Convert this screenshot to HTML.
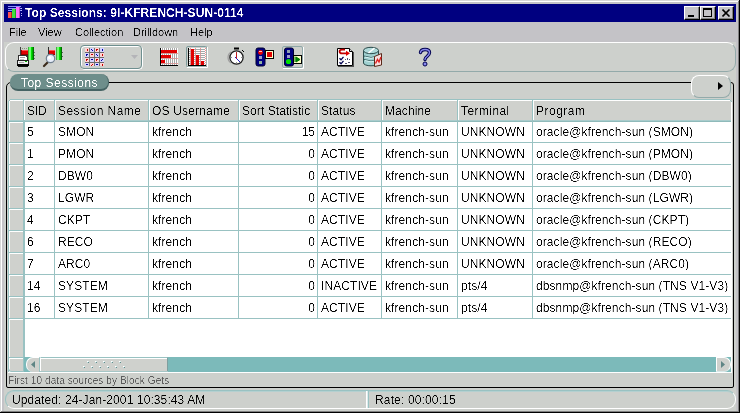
<!DOCTYPE html>
<html><head><meta charset="utf-8">
<style>
*{margin:0;padding:0;box-sizing:border-box}
html,body{width:740px;height:413px;overflow:hidden;background:#c4c3c7}
body{position:relative;font-family:"Liberation Sans",sans-serif;font-size:12px;color:#000}
.a{position:absolute}
.t{position:absolute;white-space:pre;line-height:1;filter:url(#crisp)}
.c{font-size:12px;letter-spacing:0.09px}
.menu{font-size:11px;top:27px}
.wb{position:absolute;top:6px;width:16px;height:14px;background:#c4c3c7;border-top:1px solid #fff;border-left:1px solid #fff;border-right:1px solid #000;border-bottom:1px solid #000;box-shadow:inset -1px -1px 0 #808080}
</style></head><body>
<svg width="0" height="0" style="position:absolute"><filter id="crisp" x="0" y="0" width="100%" height="100%"><feComponentTransfer><feFuncA type="linear" slope="2.5" intercept="-0.9"/></feComponentTransfer></filter></svg>
<div class="a" style="left:0px;top:0px;width:740px;height:1px;background:#d8d8d8;"></div>
<div class="a" style="left:0px;top:0px;width:1px;height:413px;background:#d8d8d8;"></div>
<div class="a" style="left:1px;top:1px;width:738px;height:1px;background:#fff;"></div>
<div class="a" style="left:1px;top:1px;width:1px;height:411px;background:#fff;"></div>
<div class="a" style="left:739px;top:0px;width:1px;height:413px;background:#000;"></div>
<div class="a" style="left:0px;top:412px;width:740px;height:1px;background:#000;"></div>
<div class="a" style="left:738px;top:1px;width:1px;height:411px;background:#808080;"></div>
<div class="a" style="left:1px;top:411px;width:738px;height:1px;background:#808080;"></div>
<div class="a" style="left:4px;top:42px;width:732px;height:369px;background:#cdd0cc;"></div>
<div class="a" style="left:4px;top:4px;width:732px;height:18px;background:#000080;"></div>
<svg class="a" style="left:8px;top:6px" width="14" height="14" viewBox="0 0 14 14" shape-rendering="crispEdges">
<rect x="0" y="0" width="13" height="1" fill="#9090ff"/><rect x="0" y="2" width="13" height="1" fill="#9090ff"/><rect x="0" y="4" width="13" height="1" fill="#9090ff"/>
<rect x="0" y="6" width="4" height="6" fill="#ff5050"/><rect x="3" y="6" width="1" height="6" fill="#c02020"/>
<rect x="4" y="3" width="4" height="9" fill="#40e040"/><rect x="7" y="3" width="1" height="9" fill="#20a020"/>
<rect x="8" y="1" width="4" height="11" fill="#ff70ff"/><rect x="11" y="1" width="1" height="11" fill="#c040c0"/>
<rect x="13" y="2" width="1" height="1" fill="#c0c0ff"/><rect x="13" y="4" width="1" height="1" fill="#c0c0ff"/><rect x="13" y="7" width="1" height="1" fill="#c0c0ff"/><rect x="13" y="9" width="1" height="1" fill="#c0c0ff"/>
</svg>
<div class="t" style="left:25px;top:7px;color:#fff;font-weight:bold;font-size:12px;letter-spacing:0.06px">Top Sessions: 9I-KFRENCH-SUN-0114</div>
<div class="wb" style="left:684px"><div class="a" style="left:3px;top:8px;width:6px;height:2px;background:#000"></div></div>
<div class="wb" style="left:700px"><div class="a" style="left:2px;top:1px;width:9px;height:9px;border:1px solid #000;border-top-width:2px"></div></div>
<div class="wb" style="left:718px"><svg class="a" style="left:3px;top:2px" width="9" height="8" viewBox="0 0 9 8"><path d="M0.5 0.5L7.5 7.5M7.5 0.5L0.5 7.5" stroke="#000" stroke-width="1.6"/></svg></div>
<div class="t menu" style="left:9px">File</div>
<div class="t menu" style="left:38px">View</div>
<div class="t menu" style="left:75px">Collection</div>
<div class="t menu" style="left:133px">Drilldown</div>
<div class="t menu" style="left:190px">Help</div>
<div class="a" style="left:5px;top:42px;width:731px;height:30px;border:1px solid #fff;border-right-color:#93aaaa;border-bottom-color:#93aaaa;border-radius:9px"></div>
<div class="a" style="left:80px;top:45px;width:63px;height:25px;border:1px solid #fff;border-top-color:transparent;border-left-color:transparent;border-radius:5px"></div>
<div class="a" style="left:80px;top:45px;width:62px;height:24px;border:1px solid #6e8f8f;border-radius:4px;box-shadow:inset 1px 1px 0 #fff"></div>
<svg class="a" style="left:131px;top:55px" width="8" height="4"><path d="M0 0H7L3.5 4Z" fill="#b4b4b8"/></svg>
<svg class="a" style="left:0;top:0" width="740" height="80" viewBox="0 0 740 80">
<g shape-rendering="crispEdges">
<rect x="20" y="47" width="1" height="8" fill="#404040"/>
<rect x="22" y="48" width="1" height="1" fill="#8a9a7a"/>
<rect x="24" y="48" width="1" height="1" fill="#8a9a7a"/>
<rect x="26" y="48" width="1" height="1" fill="#8a9a7a"/>
<rect x="28" y="48" width="1" height="1" fill="#8a9a7a"/>
<rect x="30" y="48" width="1" height="1" fill="#8a9a7a"/>
<rect x="32" y="48" width="1" height="1" fill="#8a9a7a"/>
<rect x="21" y="50" width="7" height="5" fill="#e00000"/><rect x="21" y="50" width="7" height="1" fill="#ff5050"/><rect x="21" y="50" width="1" height="5" fill="#a00000"/><rect x="21" y="54" width="7" height="1" fill="#900000"/>
<rect x="28" y="47" width="6" height="13" fill="#00e000"/><rect x="28" y="47" width="1" height="13" fill="#40b040"/><rect x="29" y="47" width="2" height="13" fill="#70ff70"/><rect x="33" y="47" width="1" height="13" fill="#007000"/><rect x="32" y="47" width="1" height="13" fill="#00b000"/>
<rect x="34" y="52" width="1" height="1" fill="#707070"/><rect x="34" y="55" width="1" height="1" fill="#707070"/><rect x="34" y="58" width="1" height="1" fill="#707070"/>
<rect x="18" y="55" width="10" height="5" fill="#303030"/><rect x="19" y="56" width="8" height="4" fill="#fff"/>
<rect x="20" y="57" width="5" height="1" fill="#a0a0a0"/><rect x="20" y="59" width="4" height="1" fill="#c0c0c0"/><rect x="26" y="56" width="1" height="1" fill="#404040"/>
<rect x="17" y="60" width="12" height="4" fill="#202020"/><rect x="18" y="61" width="10" height="3" fill="#f0f0f0"/>
<rect x="19" y="62" width="5" height="1" fill="#a8a8a8"/><rect x="25" y="61" width="2" height="1" fill="#00b000"/>
<rect x="17" y="64" width="12" height="2" fill="#000"/><rect x="18" y="66" width="10" height="1" fill="#101010"/>
</g>
<g shape-rendering="crispEdges">
<rect x="48" y="47" width="1" height="9" fill="#303030"/>
<rect x="49" y="50" width="6" height="5" fill="#e00000"/><rect x="49" y="50" width="6" height="1" fill="#ff5050"/><rect x="49" y="54" width="6" height="1" fill="#900000"/>
<rect x="56" y="47" width="6" height="13" fill="#00e000"/><rect x="56" y="47" width="1" height="13" fill="#40b040"/><rect x="57" y="47" width="2" height="13" fill="#70ff70"/><rect x="61" y="47" width="1" height="13" fill="#007000"/><rect x="60" y="47" width="1" height="13" fill="#00b000"/>
<rect x="62" y="52" width="1" height="1" fill="#606060"/><rect x="62" y="56" width="1" height="1" fill="#606060"/>
</g>
<line x1="44" y1="66" x2="48" y2="62" stroke="#3a2a1a" stroke-width="2.2" stroke-linecap="round"/>
<circle cx="50.5" cy="58.5" r="4.2" fill="#e8eefa" stroke="#708090" stroke-width="1.2"/>
<circle cx="49.5" cy="57.5" r="1.6" fill="#fff"/>
<g shape-rendering="crispEdges">
<rect x="85" y="48" width="4" height="4" fill="#ffd4d4"/>
<rect x="87" y="49" width="1" height="2" fill="#c00000"/>
<rect x="90" y="48" width="4" height="4" fill="#d4d4ff"/>
<rect x="91" y="49" width="1" height="1" fill="#0000a0"/><rect x="92" y="50" width="1" height="1" fill="#0000a0"/>
<rect x="95" y="48" width="4" height="4" fill="#ffd4d4"/>
<rect x="96" y="49" width="2" height="1" fill="#c00000"/><rect x="96" y="50" width="1" height="1" fill="#c00000"/>
<rect x="100" y="48" width="4" height="4" fill="#d4d4ff"/>
<rect x="102" y="49" width="1" height="2" fill="#0000a0"/>
<rect x="85" y="53" width="4" height="4" fill="#d4d4ff"/>
<rect x="86" y="54" width="2" height="1" fill="#0000a0"/><rect x="86" y="55" width="1" height="1" fill="#0000a0"/>
<rect x="90" y="53" width="4" height="4" fill="#ffd4d4"/>
<rect x="91" y="54" width="2" height="1" fill="#c00000"/>
<rect x="95" y="53" width="4" height="4" fill="#d4d4ff"/>
<rect x="96" y="54" width="1" height="1" fill="#0000a0"/><rect x="97" y="55" width="1" height="1" fill="#0000a0"/>
<rect x="100" y="53" width="4" height="4" fill="#ffd4d4"/>
<rect x="102" y="54" width="1" height="2" fill="#c00000"/>
<rect x="85" y="58" width="4" height="4" fill="#ffd4d4"/>
<rect x="86" y="59" width="2" height="1" fill="#c00000"/><rect x="86" y="60" width="1" height="1" fill="#c00000"/>
<rect x="90" y="58" width="4" height="4" fill="#d4d4ff"/>
<rect x="91" y="59" width="2" height="1" fill="#0000a0"/>
<rect x="95" y="58" width="4" height="4" fill="#ffd4d4"/>
<rect x="96" y="59" width="2" height="1" fill="#c00000"/><rect x="96" y="60" width="1" height="1" fill="#c00000"/>
<rect x="100" y="58" width="4" height="4" fill="#d4d4ff"/>
<rect x="102" y="59" width="1" height="1" fill="#0000a0"/><rect x="101" y="60" width="1" height="1" fill="#0000a0"/>
<rect x="85" y="63" width="4" height="3" fill="#d4d4ff"/>
<rect x="86" y="64" width="2" height="1" fill="#0000a0"/>
<rect x="90" y="63" width="4" height="3" fill="#ffd4d4"/>
<rect x="92" y="64" width="1" height="1" fill="#c00000"/><rect x="91" y="65" width="1" height="1" fill="#c00000"/>
<rect x="95" y="63" width="4" height="3" fill="#d4d4ff"/>
<rect x="96" y="64" width="2" height="1" fill="#0000a0"/>
<rect x="100" y="63" width="4" height="3" fill="#ffd4d4"/>
<rect x="102" y="64" width="1" height="2" fill="#c00000"/>
<rect x="89" y="48" width="1" height="18" fill="#747474"/>
<rect x="94" y="48" width="1" height="18" fill="#747474"/>
<rect x="99" y="48" width="1" height="18" fill="#747474"/>
<rect x="85" y="52" width="19" height="1" fill="#6a6a6a"/>
<rect x="85" y="57" width="19" height="1" fill="#6a6a6a"/>
<rect x="85" y="62" width="19" height="1" fill="#6a6a6a"/>
</g>
<g shape-rendering="crispEdges">
<rect x="161" y="48" width="17" height="17" fill="#fff"/>
<rect x="162" y="48" width="1" height="17" fill="#a8a8a8"/>
<rect x="164" y="48" width="1" height="17" fill="#a8a8a8"/>
<rect x="166" y="48" width="1" height="17" fill="#a8a8a8"/>
<rect x="168" y="48" width="1" height="17" fill="#a8a8a8"/>
<rect x="170" y="48" width="1" height="17" fill="#a8a8a8"/>
<rect x="172" y="48" width="1" height="17" fill="#a8a8a8"/>
<rect x="174" y="48" width="1" height="17" fill="#a8a8a8"/>
<rect x="176" y="48" width="1" height="17" fill="#a8a8a8"/>
<rect x="161" y="53" width="1" height="1" fill="#ff9090"/>
<rect x="163" y="53" width="1" height="1" fill="#ff9090"/>
<rect x="165" y="53" width="1" height="1" fill="#ff9090"/>
<rect x="167" y="53" width="1" height="1" fill="#ff9090"/>
<rect x="169" y="53" width="1" height="1" fill="#ff9090"/>
<rect x="171" y="53" width="1" height="1" fill="#ff9090"/>
<rect x="173" y="53" width="1" height="1" fill="#ff9090"/>
<rect x="175" y="53" width="1" height="1" fill="#ff9090"/>
<rect x="177" y="53" width="1" height="1" fill="#ff9090"/>
<rect x="161" y="58" width="1" height="1" fill="#ff9090"/>
<rect x="163" y="58" width="1" height="1" fill="#ff9090"/>
<rect x="165" y="58" width="1" height="1" fill="#ff9090"/>
<rect x="167" y="58" width="1" height="1" fill="#ff9090"/>
<rect x="169" y="58" width="1" height="1" fill="#ff9090"/>
<rect x="171" y="58" width="1" height="1" fill="#ff9090"/>
<rect x="173" y="58" width="1" height="1" fill="#ff9090"/>
<rect x="175" y="58" width="1" height="1" fill="#ff9090"/>
<rect x="177" y="58" width="1" height="1" fill="#ff9090"/>
<rect x="161" y="63" width="1" height="1" fill="#ff9090"/>
<rect x="163" y="63" width="1" height="1" fill="#ff9090"/>
<rect x="165" y="63" width="1" height="1" fill="#ff9090"/>
<rect x="167" y="63" width="1" height="1" fill="#ff9090"/>
<rect x="169" y="63" width="1" height="1" fill="#ff9090"/>
<rect x="171" y="63" width="1" height="1" fill="#ff9090"/>
<rect x="173" y="63" width="1" height="1" fill="#ff9090"/>
<rect x="175" y="63" width="1" height="1" fill="#ff9090"/>
<rect x="177" y="63" width="1" height="1" fill="#ff9090"/>
<rect x="161" y="50" width="16" height="3" fill="#e00000"/>
<rect x="161" y="55" width="10" height="3" fill="#e00000"/>
<rect x="161" y="60" width="4" height="3" fill="#e00000"/>
<rect x="160" y="48" width="1" height="18" fill="#000"/><rect x="160" y="65" width="18" height="1" fill="#000"/>
</g>
<rect x="186.5" y="46.5" width="20.5" height="20.5" rx="1.5" fill="none" stroke="#7f9c9c" stroke-width="1"/>
<path d="M207.5 47V67.5H187" fill="none" stroke="#fff" stroke-width="1"/>
<g shape-rendering="crispEdges">
<rect x="189" y="48" width="17" height="17" fill="#fff"/>
<rect x="189" y="49" width="16" height="1" fill="#a8a8a8"/>
<rect x="189" y="51" width="16" height="1" fill="#a8a8a8"/>
<rect x="189" y="53" width="16" height="1" fill="#a8a8a8"/>
<rect x="189" y="55" width="16" height="1" fill="#a8a8a8"/>
<rect x="189" y="57" width="16" height="1" fill="#a8a8a8"/>
<rect x="189" y="59" width="16" height="1" fill="#a8a8a8"/>
<rect x="189" y="61" width="16" height="1" fill="#a8a8a8"/>
<rect x="189" y="63" width="16" height="1" fill="#a8a8a8"/>
<rect x="190" y="48" width="1" height="1" fill="#ff9090"/>
<rect x="190" y="50" width="1" height="1" fill="#ff9090"/>
<rect x="190" y="52" width="1" height="1" fill="#ff9090"/>
<rect x="190" y="54" width="1" height="1" fill="#ff9090"/>
<rect x="190" y="56" width="1" height="1" fill="#ff9090"/>
<rect x="190" y="58" width="1" height="1" fill="#ff9090"/>
<rect x="190" y="60" width="1" height="1" fill="#ff9090"/>
<rect x="190" y="62" width="1" height="1" fill="#ff9090"/>
<rect x="190" y="64" width="1" height="1" fill="#ff9090"/>
<rect x="195" y="48" width="1" height="1" fill="#ff9090"/>
<rect x="195" y="50" width="1" height="1" fill="#ff9090"/>
<rect x="195" y="52" width="1" height="1" fill="#ff9090"/>
<rect x="195" y="54" width="1" height="1" fill="#ff9090"/>
<rect x="195" y="56" width="1" height="1" fill="#ff9090"/>
<rect x="195" y="58" width="1" height="1" fill="#ff9090"/>
<rect x="195" y="60" width="1" height="1" fill="#ff9090"/>
<rect x="195" y="62" width="1" height="1" fill="#ff9090"/>
<rect x="195" y="64" width="1" height="1" fill="#ff9090"/>
<rect x="200" y="48" width="1" height="1" fill="#ff9090"/>
<rect x="200" y="50" width="1" height="1" fill="#ff9090"/>
<rect x="200" y="52" width="1" height="1" fill="#ff9090"/>
<rect x="200" y="54" width="1" height="1" fill="#ff9090"/>
<rect x="200" y="56" width="1" height="1" fill="#ff9090"/>
<rect x="200" y="58" width="1" height="1" fill="#ff9090"/>
<rect x="200" y="60" width="1" height="1" fill="#ff9090"/>
<rect x="200" y="62" width="1" height="1" fill="#ff9090"/>
<rect x="200" y="64" width="1" height="1" fill="#ff9090"/>
<rect x="205" y="48" width="1" height="1" fill="#ff9090"/>
<rect x="205" y="50" width="1" height="1" fill="#ff9090"/>
<rect x="205" y="52" width="1" height="1" fill="#ff9090"/>
<rect x="205" y="54" width="1" height="1" fill="#ff9090"/>
<rect x="205" y="56" width="1" height="1" fill="#ff9090"/>
<rect x="205" y="58" width="1" height="1" fill="#ff9090"/>
<rect x="205" y="60" width="1" height="1" fill="#ff9090"/>
<rect x="205" y="62" width="1" height="1" fill="#ff9090"/>
<rect x="205" y="64" width="1" height="1" fill="#ff9090"/>
<rect x="191" y="49" width="3" height="16" fill="#e00000"/>
<rect x="196" y="55" width="3" height="10" fill="#e00000"/>
<rect x="201" y="61" width="3" height="4" fill="#e00000"/>
<rect x="188" y="48" width="1" height="18" fill="#000"/><rect x="188" y="65" width="18" height="1" fill="#000"/>
</g>
<circle cx="236.5" cy="57.5" r="6.6" fill="#fff" stroke="#202020" stroke-width="1.3"/>
<path d="M231 52A6.6 6.6 0 0 0 231 63" fill="none" stroke="#a0a0a0" stroke-width="1.3"/>
<rect x="234" y="47.5" width="5" height="2" fill="#000"/>
<line x1="242" y1="50" x2="244" y2="52" stroke="#000" stroke-width="1"/>
<g shape-rendering="crispEdges">
<rect x="236" y="52" width="1" height="6" fill="#c02020"/>
<rect x="236" y="58" width="1" height="1" fill="#800080"/><rect x="237" y="59" width="1" height="1" fill="#2020c0"/><rect x="238" y="60" width="1" height="1" fill="#2020c0"/><rect x="239" y="61" width="1" height="1" fill="#2020c0"/>
<rect x="231" y="57" width="1" height="1" fill="#909090"/><rect x="241" y="57" width="1" height="1" fill="#909090"/><rect x="236" y="62" width="1" height="1" fill="#909090"/><rect x="235" y="57" width="1" height="1" fill="#2020c0"/>
</g>
<rect x="256" y="48" width="9" height="18" rx="2" fill="#000080" stroke="#000030" stroke-width="1"/>
<circle cx="260.5" cy="52.5" r="2.4" fill="#f00000"/><rect x="259" y="51" width="3" height="1" fill="#ffc0c0"/>
<rect x="259" y="56" width="3" height="3" fill="#a0a0c8"/><rect x="259" y="61" width="3" height="3" fill="#90b0a0"/>
<rect x="265.5" y="50.5" width="8" height="8" fill="#ffffc8" stroke="#000" stroke-width="1"/>
<rect x="267" y="52" width="5" height="5" fill="#e00000"/>
<rect x="282.5" y="46.5" width="20" height="21" rx="1.5" fill="none" stroke="#8fa8a8" stroke-width="1"/>
<path d="M303.5 47V68.5H283" fill="none" stroke="#fff" stroke-width="1"/>
<rect x="284.5" y="48" width="9" height="18" rx="2" fill="#000080" stroke="#000030" stroke-width="1"/>
<rect x="287" y="50" width="3" height="3" fill="#90a0b0"/><rect x="287" y="55" width="3" height="3" fill="#a0a0c8"/>
<circle cx="288.5" cy="61.5" r="2.6" fill="#00e000"/>
<rect x="293.5" y="55.5" width="8" height="8" fill="#ffffc8" stroke="#000" stroke-width="1"/>
<path d="M295 56.5V62M296 57L300 59.5L296 62Z" fill="#008000" stroke="#008000" stroke-width="1"/>
<path d="M337.5 48.5H349.5L352.5 51.5V65.5H337.5Z" fill="#fff" stroke="#000" stroke-width="1"/>
<path d="M349.5 48.5V51.5H352.5" fill="#e0e0e0" stroke="#000" stroke-width="1"/>
<rect x="338" y="66" width="15" height="1" fill="#505050"/><rect x="353" y="52" width="1" height="15" fill="#505050"/>
<path d="M345 49.6H342Q339.6 49.6 339.6 51.4Q339.6 53.3 342 53.3H347" fill="none" stroke="#c00000" stroke-width="1.8"/>
<path d="M346 50.8L350 53.3L346 56Z" fill="#e00000"/>
<path d="M339.5 58.3L341 59.8L343.5 56.8M339.5 62.3L341 63.8L343.5 60.8" fill="none" stroke="#000050" stroke-width="1.3"/>
<g shape-rendering="crispEdges"><rect x="345" y="59" width="1" height="1" fill="#505070"/><rect x="347" y="58" width="1" height="2" fill="#505070"/><rect x="349" y="59" width="1" height="1" fill="#505070"/><rect x="345" y="63" width="2" height="1" fill="#505070"/><rect x="348" y="62" width="2" height="1" fill="#505070"/></g>
<path d="M363.5 50.5V63A7.5 2.8 0 0 0 378.5 63V50.5" fill="#a0d0d0" stroke="#2a4a4a" stroke-width="1"/>
<path d="M364 56Q371 59 378 56M364 59.5Q371 62.5 378 59.5" fill="none" stroke="#3a6262" stroke-width="1"/>
<path d="M365 57Q371 59.5 377 57M365 60.5Q371 63 377 60.5" fill="none" stroke="#e8ffff" stroke-width="0.8"/>
<ellipse cx="371" cy="50.5" rx="7.5" ry="3.2" fill="#b0dada" stroke="#2a4a4a" stroke-width="1"/>
<path d="M368.5 53L374.5 48" stroke="#fff" stroke-width="1.6"/>
<path d="M374.5 56.5L381.5 53.5V65L374.5 66.5Z" fill="#f8e0e0" stroke="#5a2818" stroke-width="1"/>
<path d="M375.5 63.5L377.5 59.5L379 62L381 57" fill="none" stroke="#e02020" stroke-width="1.4"/>
<path d="M420.5 52.5Q421 49.5 425 49.5Q429.5 49.5 429.5 52.5Q429.5 54.5 427 56.5Q425 58 425 59.5" fill="none" stroke="#000050" stroke-width="3.4" stroke-linecap="round"/>
<path d="M420.5 52.5Q421 49.5 425 49.5Q429.5 49.5 429.5 52.5Q429.5 54.5 427 56.5Q425 58 425 59.5" fill="none" stroke="#8a8aee" stroke-width="1.4" stroke-linecap="round"/>
<circle cx="425" cy="64" r="2" fill="#8a8aee" stroke="#000050" stroke-width="1"/>
</svg>
<div class="a" style="left:6px;top:82px;width:728px;height:306px;border:1px solid #000;border-radius:5px 3px 2px 2px"></div>
<div class="a" style="left:10px;top:74px;width:99px;height:17px;background:#6e8e8b;border-radius:8px;border-right:1px solid #456363;border-bottom:2px solid #456363"></div>
<div class="t" style="left:21px;top:77px;color:#fff;font-size:12px;letter-spacing:0.47px">Top Sessions</div>
<div class="a" style="left:691px;top:75px;width:40px;height:23px;background:#cdd0cc;border:1px solid #fff;border-right-color:#93aaaa;border-bottom-color:#93aaaa;border-radius:8px"></div>
<svg class="a" style="left:718px;top:82px" width="5" height="8"><path d="M0 0L5 4L0 8Z" fill="#000"/></svg>
<div class="a" style="left:8px;top:99px;width:724px;height:274px;background:#fff;"></div>
<div class="a" style="left:8px;top:99px;width:723px;height:22px;background:#cfd1cd;"></div>
<div class="a" style="left:8px;top:99px;width:15px;height:258px;background:#cfd1cd;"></div>
<div class="a" style="left:8px;top:99px;width:723px;height:1px;background:#99c2c2;"></div>
<div class="a" style="left:9px;top:100px;width:722px;height:1px;background:#fff;"></div>
<div class="a" style="left:8px;top:99px;width:1px;height:273px;background:#99c2c2;"></div>
<div class="a" style="left:9px;top:100px;width:1px;height:257px;background:#fff;"></div>
<div class="a" style="left:8px;top:120px;width:723px;height:1px;background:#99c2c2;"></div>
<div class="a" style="left:8px;top:120px;width:723px;height:1px;background:#a9cccc;"></div>
<div class="a" style="left:8px;top:121px;width:723px;height:1px;background:#8fbaba;"></div>
<div class="a" style="left:9px;top:122px;width:14px;height:1px;background:#fff;"></div>
<div class="a" style="left:8px;top:142px;width:723px;height:1px;background:#99c2c2;"></div>
<div class="a" style="left:9px;top:143px;width:14px;height:1px;background:#fff;"></div>
<div class="a" style="left:8px;top:164px;width:723px;height:1px;background:#99c2c2;"></div>
<div class="a" style="left:9px;top:165px;width:14px;height:1px;background:#fff;"></div>
<div class="a" style="left:8px;top:186px;width:723px;height:1px;background:#99c2c2;"></div>
<div class="a" style="left:9px;top:187px;width:14px;height:1px;background:#fff;"></div>
<div class="a" style="left:8px;top:208px;width:723px;height:1px;background:#99c2c2;"></div>
<div class="a" style="left:9px;top:209px;width:14px;height:1px;background:#fff;"></div>
<div class="a" style="left:8px;top:230px;width:723px;height:1px;background:#99c2c2;"></div>
<div class="a" style="left:9px;top:231px;width:14px;height:1px;background:#fff;"></div>
<div class="a" style="left:8px;top:252px;width:723px;height:1px;background:#99c2c2;"></div>
<div class="a" style="left:9px;top:253px;width:14px;height:1px;background:#fff;"></div>
<div class="a" style="left:8px;top:274px;width:723px;height:1px;background:#99c2c2;"></div>
<div class="a" style="left:9px;top:275px;width:14px;height:1px;background:#fff;"></div>
<div class="a" style="left:8px;top:296px;width:723px;height:1px;background:#99c2c2;"></div>
<div class="a" style="left:9px;top:297px;width:14px;height:1px;background:#fff;"></div>
<div class="a" style="left:8px;top:318px;width:723px;height:1px;background:#99c2c2;"></div>
<div class="a" style="left:9px;top:319px;width:14px;height:1px;background:#fff;"></div>
<div class="a" style="left:23px;top:99px;width:1px;height:273px;background:#99c2c2;"></div>
<div class="a" style="left:24px;top:120px;width:1px;height:237px;background:#99c2c2;"></div>
<div class="a" style="left:24px;top:100px;width:1px;height:20px;background:#fff;"></div>
<div class="a" style="left:54px;top:99px;width:1px;height:220px;background:#99c2c2;"></div>
<div class="a" style="left:55px;top:100px;width:1px;height:20px;background:#fff;"></div>
<div class="a" style="left:148px;top:99px;width:1px;height:220px;background:#99c2c2;"></div>
<div class="a" style="left:149px;top:100px;width:1px;height:20px;background:#fff;"></div>
<div class="a" style="left:238px;top:99px;width:1px;height:220px;background:#99c2c2;"></div>
<div class="a" style="left:239px;top:100px;width:1px;height:20px;background:#fff;"></div>
<div class="a" style="left:317px;top:99px;width:1px;height:220px;background:#99c2c2;"></div>
<div class="a" style="left:318px;top:100px;width:1px;height:20px;background:#fff;"></div>
<div class="a" style="left:381px;top:99px;width:1px;height:220px;background:#99c2c2;"></div>
<div class="a" style="left:382px;top:100px;width:1px;height:20px;background:#fff;"></div>
<div class="a" style="left:457px;top:99px;width:1px;height:220px;background:#99c2c2;"></div>
<div class="a" style="left:458px;top:100px;width:1px;height:20px;background:#fff;"></div>
<div class="a" style="left:532px;top:99px;width:1px;height:220px;background:#99c2c2;"></div>
<div class="a" style="left:533px;top:100px;width:1px;height:20px;background:#fff;"></div>
<svg class="a" style="left:8px;top:99px" width="4" height="4" shape-rendering="crispEdges"><rect x="0" y="0" width="2" height="1" fill="#cdd0cc"/><rect x="0" y="1" width="1" height="1" fill="#cdd0cc"/><rect x="2" y="0" width="2" height="1" fill="#99c2c2"/><rect x="1" y="1" width="1" height="1" fill="#99c2c2"/><rect x="0" y="2" width="1" height="2" fill="#99c2c2"/><rect x="2" y="1" width="2" height="1" fill="#fff"/><rect x="1" y="2" width="1" height="2" fill="#fff"/></svg>
<svg class="a" style="left:729px;top:99px" width="3" height="3" shape-rendering="crispEdges"><rect x="1" y="0" width="2" height="1" fill="#cdd0cc"/><rect x="2" y="1" width="1" height="1" fill="#cdd0cc"/><rect x="0" y="0" width="1" height="1" fill="#99c2c2"/><rect x="1" y="1" width="1" height="1" fill="#99c2c2"/><rect x="2" y="2" width="1" height="1" fill="#99c2c2"/></svg>
<div class="t c" style="left:27px;top:105px;letter-spacing:-0.2px">SID</div>
<div class="t c" style="left:58px;top:105px;letter-spacing:0.44px">Session Name</div>
<div class="t c" style="left:152px;top:105px;letter-spacing:0.18px">OS Username</div>
<div class="t c" style="left:242px;top:105px;letter-spacing:0.07px">Sort Statistic</div>
<div class="t c" style="left:321px;top:105px;letter-spacing:0.1px">Status</div>
<div class="t c" style="left:385px;top:105px;letter-spacing:0.08px">Machine</div>
<div class="t c" style="left:461px;top:105px;letter-spacing:0.41px">Terminal</div>
<div class="t c" style="left:536px;top:105px;letter-spacing:0.5px">Program</div>
<div class="t c" style="left:27px;top:126px;width:27px;overflow:hidden">5</div>
<div class="t c" style="left:58px;top:126px;width:90px;overflow:hidden">SMON</div>
<div class="t c" style="left:152px;top:126px;width:86px;overflow:hidden">kfrench</div>
<div class="t c" style="left:239px;width:76px;text-align:right;top:126px;letter-spacing:0">15</div>
<div class="t c" style="left:321px;top:126px;width:60px;overflow:hidden">ACTIVE</div>
<div class="t c" style="left:385px;top:126px;width:72px;overflow:hidden">kfrench-sun</div>
<div class="t c" style="left:461px;top:126px;width:71px;overflow:hidden">UNKNOWN</div>
<div class="t c" style="left:536px;top:126px;width:195px;overflow:hidden">oracle@kfrench-sun (SMON)</div>
<div class="t c" style="left:27px;top:148px;width:27px;overflow:hidden">1</div>
<div class="t c" style="left:58px;top:148px;width:90px;overflow:hidden">PMON</div>
<div class="t c" style="left:152px;top:148px;width:86px;overflow:hidden">kfrench</div>
<div class="t c" style="left:239px;width:76px;text-align:right;top:148px;letter-spacing:0">0</div>
<div class="t c" style="left:321px;top:148px;width:60px;overflow:hidden">ACTIVE</div>
<div class="t c" style="left:385px;top:148px;width:72px;overflow:hidden">kfrench-sun</div>
<div class="t c" style="left:461px;top:148px;width:71px;overflow:hidden">UNKNOWN</div>
<div class="t c" style="left:536px;top:148px;width:195px;overflow:hidden">oracle@kfrench-sun (PMON)</div>
<div class="t c" style="left:27px;top:170px;width:27px;overflow:hidden">2</div>
<div class="t c" style="left:58px;top:170px;width:90px;overflow:hidden">DBW0</div>
<div class="t c" style="left:152px;top:170px;width:86px;overflow:hidden">kfrench</div>
<div class="t c" style="left:239px;width:76px;text-align:right;top:170px;letter-spacing:0">0</div>
<div class="t c" style="left:321px;top:170px;width:60px;overflow:hidden">ACTIVE</div>
<div class="t c" style="left:385px;top:170px;width:72px;overflow:hidden">kfrench-sun</div>
<div class="t c" style="left:461px;top:170px;width:71px;overflow:hidden">UNKNOWN</div>
<div class="t c" style="left:536px;top:170px;width:195px;overflow:hidden">oracle@kfrench-sun (DBW0)</div>
<div class="t c" style="left:27px;top:192px;width:27px;overflow:hidden">3</div>
<div class="t c" style="left:58px;top:192px;width:90px;overflow:hidden">LGWR</div>
<div class="t c" style="left:152px;top:192px;width:86px;overflow:hidden">kfrench</div>
<div class="t c" style="left:239px;width:76px;text-align:right;top:192px;letter-spacing:0">0</div>
<div class="t c" style="left:321px;top:192px;width:60px;overflow:hidden">ACTIVE</div>
<div class="t c" style="left:385px;top:192px;width:72px;overflow:hidden">kfrench-sun</div>
<div class="t c" style="left:461px;top:192px;width:71px;overflow:hidden">UNKNOWN</div>
<div class="t c" style="left:536px;top:192px;width:195px;overflow:hidden">oracle@kfrench-sun (LGWR)</div>
<div class="t c" style="left:27px;top:214px;width:27px;overflow:hidden">4</div>
<div class="t c" style="left:58px;top:214px;width:90px;overflow:hidden">CKPT</div>
<div class="t c" style="left:152px;top:214px;width:86px;overflow:hidden">kfrench</div>
<div class="t c" style="left:239px;width:76px;text-align:right;top:214px;letter-spacing:0">0</div>
<div class="t c" style="left:321px;top:214px;width:60px;overflow:hidden">ACTIVE</div>
<div class="t c" style="left:385px;top:214px;width:72px;overflow:hidden">kfrench-sun</div>
<div class="t c" style="left:461px;top:214px;width:71px;overflow:hidden">UNKNOWN</div>
<div class="t c" style="left:536px;top:214px;width:195px;overflow:hidden">oracle@kfrench-sun (CKPT)</div>
<div class="t c" style="left:27px;top:236px;width:27px;overflow:hidden">6</div>
<div class="t c" style="left:58px;top:236px;width:90px;overflow:hidden">RECO</div>
<div class="t c" style="left:152px;top:236px;width:86px;overflow:hidden">kfrench</div>
<div class="t c" style="left:239px;width:76px;text-align:right;top:236px;letter-spacing:0">0</div>
<div class="t c" style="left:321px;top:236px;width:60px;overflow:hidden">ACTIVE</div>
<div class="t c" style="left:385px;top:236px;width:72px;overflow:hidden">kfrench-sun</div>
<div class="t c" style="left:461px;top:236px;width:71px;overflow:hidden">UNKNOWN</div>
<div class="t c" style="left:536px;top:236px;width:195px;overflow:hidden">oracle@kfrench-sun (RECO)</div>
<div class="t c" style="left:27px;top:258px;width:27px;overflow:hidden">7</div>
<div class="t c" style="left:58px;top:258px;width:90px;overflow:hidden">ARC0</div>
<div class="t c" style="left:152px;top:258px;width:86px;overflow:hidden">kfrench</div>
<div class="t c" style="left:239px;width:76px;text-align:right;top:258px;letter-spacing:0">0</div>
<div class="t c" style="left:321px;top:258px;width:60px;overflow:hidden">ACTIVE</div>
<div class="t c" style="left:385px;top:258px;width:72px;overflow:hidden">kfrench-sun</div>
<div class="t c" style="left:461px;top:258px;width:71px;overflow:hidden">UNKNOWN</div>
<div class="t c" style="left:536px;top:258px;width:195px;overflow:hidden">oracle@kfrench-sun (ARC0)</div>
<div class="t c" style="left:27px;top:280px;width:27px;overflow:hidden">14</div>
<div class="t c" style="left:58px;top:280px;width:90px;overflow:hidden">SYSTEM</div>
<div class="t c" style="left:152px;top:280px;width:86px;overflow:hidden">kfrench</div>
<div class="t c" style="left:239px;width:76px;text-align:right;top:280px;letter-spacing:0">0</div>
<div class="t c" style="left:321px;top:280px;width:60px;overflow:hidden">INACTIVE</div>
<div class="t c" style="left:385px;top:280px;width:72px;overflow:hidden">kfrench-sun</div>
<div class="t c" style="left:461px;top:280px;width:71px;overflow:hidden">pts/4</div>
<div class="t c" style="left:536px;top:280px;width:195px;overflow:hidden">dbsnmp@kfrench-sun (TNS V1-V3)</div>
<div class="t c" style="left:27px;top:302px;width:27px;overflow:hidden">16</div>
<div class="t c" style="left:58px;top:302px;width:90px;overflow:hidden">SYSTEM</div>
<div class="t c" style="left:152px;top:302px;width:86px;overflow:hidden">kfrench</div>
<div class="t c" style="left:239px;width:76px;text-align:right;top:302px;letter-spacing:0">0</div>
<div class="t c" style="left:321px;top:302px;width:60px;overflow:hidden">ACTIVE</div>
<div class="t c" style="left:385px;top:302px;width:72px;overflow:hidden">kfrench-sun</div>
<div class="t c" style="left:461px;top:302px;width:71px;overflow:hidden">pts/4</div>
<div class="t c" style="left:536px;top:302px;width:195px;overflow:hidden">dbsnmp@kfrench-sun (TNS V1-V3)</div>
<div class="a" style="left:8px;top:357px;width:15px;height:1px;background:#99c2c2;"></div>
<div class="a" style="left:8px;top:358px;width:16px;height:14px;background:#cfd1cd;border-left:1px solid #99c2c2;border-bottom:1px solid #99c2c2;border-right:1px solid #99c2c2;border-radius:0 0 0 4px;box-shadow:inset 1px 1px 0 #fff"></div>
<div class="a" style="left:24px;top:357px;width:707px;height:15px;background:#7cbaba;"></div>
<div class="a" style="left:26px;top:357px;width:14px;height:15px;background:#cfd1cd;border-radius:7px 0 0 7px;border-left:1px solid #fff;border-top:1px solid #fff;border-right:1px solid #99c2c2"></div>
<svg class="a" style="left:31px;top:361px" width="4" height="7"><path d="M4 0V7L0 3.5Z" fill="#5f8585"/></svg>
<div class="a" style="left:40px;top:357px;width:128px;height:15px;background:#cfd1cd;border-top:1px solid #99c2c2;border-left:1px solid #fff;border-right:1px solid #7f9f9f;box-shadow:inset 0 1px 0 #fff"></div>
<div class="a" style="left:87px;top:361px;width:1px;height:1px;background:#fff;"></div>
<div class="a" style="left:88px;top:361px;width:1px;height:1px;background:#e0f0f0;"></div>
<div class="a" style="left:87px;top:362px;width:1px;height:1px;background:#c0dada;"></div>
<div class="a" style="left:88px;top:362px;width:1px;height:1px;background:#5f8a8a;"></div>
<div class="a" style="left:95px;top:361px;width:1px;height:1px;background:#fff;"></div>
<div class="a" style="left:96px;top:361px;width:1px;height:1px;background:#e0f0f0;"></div>
<div class="a" style="left:95px;top:362px;width:1px;height:1px;background:#c0dada;"></div>
<div class="a" style="left:96px;top:362px;width:1px;height:1px;background:#5f8a8a;"></div>
<div class="a" style="left:103px;top:361px;width:1px;height:1px;background:#fff;"></div>
<div class="a" style="left:104px;top:361px;width:1px;height:1px;background:#e0f0f0;"></div>
<div class="a" style="left:103px;top:362px;width:1px;height:1px;background:#c0dada;"></div>
<div class="a" style="left:104px;top:362px;width:1px;height:1px;background:#5f8a8a;"></div>
<div class="a" style="left:111px;top:361px;width:1px;height:1px;background:#fff;"></div>
<div class="a" style="left:112px;top:361px;width:1px;height:1px;background:#e0f0f0;"></div>
<div class="a" style="left:111px;top:362px;width:1px;height:1px;background:#c0dada;"></div>
<div class="a" style="left:112px;top:362px;width:1px;height:1px;background:#5f8a8a;"></div>
<div class="a" style="left:119px;top:361px;width:1px;height:1px;background:#fff;"></div>
<div class="a" style="left:120px;top:361px;width:1px;height:1px;background:#e0f0f0;"></div>
<div class="a" style="left:119px;top:362px;width:1px;height:1px;background:#c0dada;"></div>
<div class="a" style="left:120px;top:362px;width:1px;height:1px;background:#5f8a8a;"></div>
<div class="a" style="left:83px;top:366px;width:1px;height:1px;background:#fff;"></div>
<div class="a" style="left:84px;top:366px;width:1px;height:1px;background:#e0f0f0;"></div>
<div class="a" style="left:83px;top:367px;width:1px;height:1px;background:#c0dada;"></div>
<div class="a" style="left:84px;top:367px;width:1px;height:1px;background:#5f8a8a;"></div>
<div class="a" style="left:91px;top:366px;width:1px;height:1px;background:#fff;"></div>
<div class="a" style="left:92px;top:366px;width:1px;height:1px;background:#e0f0f0;"></div>
<div class="a" style="left:91px;top:367px;width:1px;height:1px;background:#c0dada;"></div>
<div class="a" style="left:92px;top:367px;width:1px;height:1px;background:#5f8a8a;"></div>
<div class="a" style="left:99px;top:366px;width:1px;height:1px;background:#fff;"></div>
<div class="a" style="left:100px;top:366px;width:1px;height:1px;background:#e0f0f0;"></div>
<div class="a" style="left:99px;top:367px;width:1px;height:1px;background:#c0dada;"></div>
<div class="a" style="left:100px;top:367px;width:1px;height:1px;background:#5f8a8a;"></div>
<div class="a" style="left:107px;top:366px;width:1px;height:1px;background:#fff;"></div>
<div class="a" style="left:108px;top:366px;width:1px;height:1px;background:#e0f0f0;"></div>
<div class="a" style="left:107px;top:367px;width:1px;height:1px;background:#c0dada;"></div>
<div class="a" style="left:108px;top:367px;width:1px;height:1px;background:#5f8a8a;"></div>
<div class="a" style="left:115px;top:366px;width:1px;height:1px;background:#fff;"></div>
<div class="a" style="left:116px;top:366px;width:1px;height:1px;background:#e0f0f0;"></div>
<div class="a" style="left:115px;top:367px;width:1px;height:1px;background:#c0dada;"></div>
<div class="a" style="left:116px;top:367px;width:1px;height:1px;background:#5f8a8a;"></div>
<div class="a" style="left:123px;top:366px;width:1px;height:1px;background:#fff;"></div>
<div class="a" style="left:124px;top:366px;width:1px;height:1px;background:#e0f0f0;"></div>
<div class="a" style="left:123px;top:367px;width:1px;height:1px;background:#c0dada;"></div>
<div class="a" style="left:124px;top:367px;width:1px;height:1px;background:#5f8a8a;"></div>
<div class="a" style="left:40px;top:371px;width:128px;height:1px;background:#a6c6c6;"></div>
<div class="a" style="left:716px;top:357px;width:15px;height:15px;background:#cfd1cd;border-radius:0 7px 7px 0;border:1px solid #fff;border-bottom-color:#d8e8e8"></div>
<svg class="a" style="left:721px;top:361px" width="4" height="7"><path d="M0 0V7L4 3.5Z" fill="#5f8585"/></svg>
<div class="a" style="left:8px;top:372px;width:724px;height:1px;background:#fff;"></div>
<div class="t" style="left:8px;top:376px;color:#5c5c5c;font-size:10px;letter-spacing:0.1px">First 10 data sources by Block Gets</div>
<div class="a" style="left:5px;top:390px;width:731px;height:19px;border:1px solid #99c2c2;border-right-color:#fff;border-bottom-color:#fff;border-radius:9px;box-shadow:inset 0 1px 0 #b4d0d0"></div>
<div class="a" style="left:366px;top:391px;width:1px;height:17px;background:#fff;"></div>
<div class="a" style="left:367px;top:391px;width:1px;height:17px;background:#dfeaea;"></div>
<div class="a" style="left:368px;top:391px;width:1px;height:17px;background:#99c2c2;"></div>
<div class="t" style="left:12px;top:394px;font-size:12px;letter-spacing:0.1px">Updated: 24-Jan-2001 10:35:43 AM</div>
<div class="t" style="left:375px;top:394px;font-size:12px;letter-spacing:0.15px">Rate: 00:00:15</div>
</body></html>
